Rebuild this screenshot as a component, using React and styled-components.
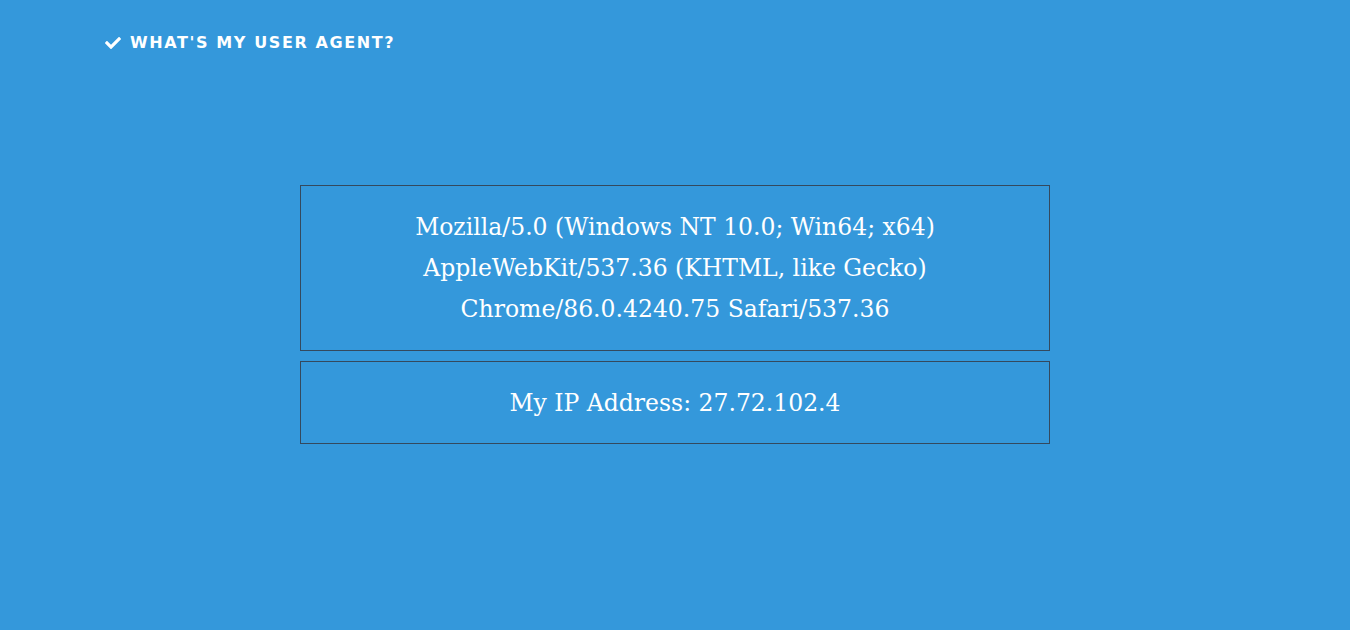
import React from "react";
import styled, { createGlobalStyle } from "styled-components";
import { FaCheck } from "react-icons/fa";

const GlobalStyle = createGlobalStyle`
  html, body {
    margin: 0;
    padding: 0;
    background: #3498db;
  }
`;

const Page = styled.div`
  min-height: 630px;
  background: #3498db;
  color: #fff;
`;

const Header = styled.header`
  display: flex;
  align-items: center;
  gap: 9px;
  padding: 33px 105px 0;
  height: 19px;
  font-family: "DejaVu Sans", "Open Sans", sans-serif;
  font-weight: 700;
  font-size: 16px;
  letter-spacing: 1.6px;
  text-transform: uppercase;

  svg {
    width: 16px;
    height: 16px;
  }
`;

const Main = styled.main`
  display: flex;
  flex-direction: column;
  align-items: center;
  gap: 10px;
  padding-top: 133px;
`;

const Box = styled.div`
  box-sizing: border-box;
  width: 750px;
  border: 1px solid #34495e;
  padding: ${(p) => p.$pad};
  text-align: center;
  font-family: "DejaVu Serif", "Liberation Serif", serif;
  font-size: 23.5px;
  line-height: 41px;
`;

const App = () => {
  return (
    <Page>
      <GlobalStyle />
      <Header>
        <FaCheck />
        <span>What's my user agent?</span>
      </Header>
      <Main>
        <Box $pad="21px 30px 20px">
          Mozilla/5.0 (Windows NT 10.0; Win64; x64)
          <br />
          AppleWebKit/537.36 (KHTML, like Gecko)
          <br />
          Chrome/86.0.4240.75 Safari/537.36
        </Box>
        <Box $pad="21px 30px 19px">My IP Address: 27.72.102.4</Box>
      </Main>
    </Page>
  );
};

export default App;
